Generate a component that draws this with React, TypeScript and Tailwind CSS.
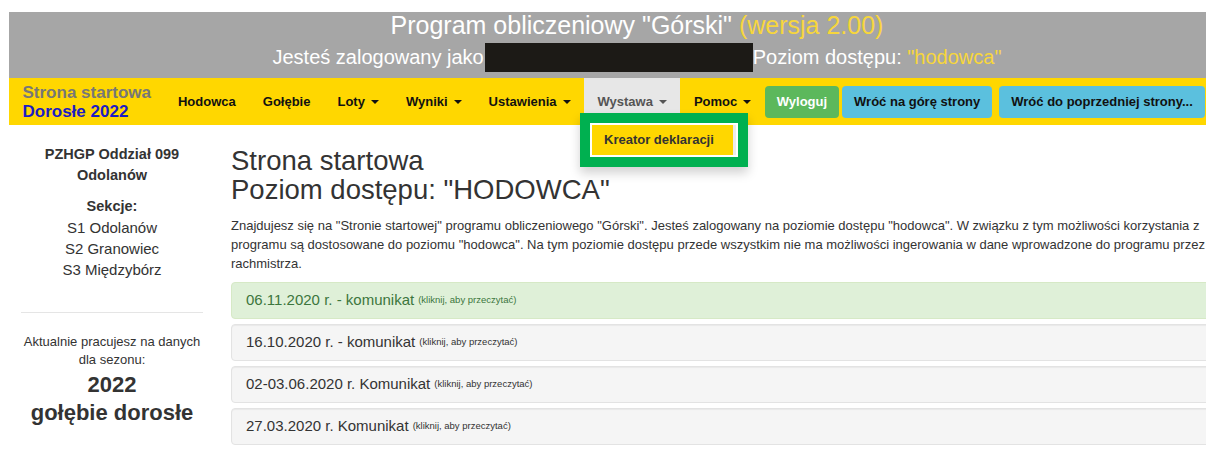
import React from 'react';

const navLinks: { label: string; caret?: boolean; active?: boolean }[] = [
  { label: 'Hodowca' },
  { label: 'Gołębie' },
  { label: 'Loty', caret: true },
  { label: 'Wyniki', caret: true },
  { label: 'Ustawienia', caret: true },
  { label: 'Wystawa', caret: true, active: true },
  { label: 'Pomoc', caret: true },
];

const notices = [
  { date: '06.11.2020 r. - komunikat', fresh: true },
  { date: '16.10.2020 r. - komunikat' },
  { date: '02-03.06.2020 r. Komunikat' },
  { date: '27.03.2020 r. Komunikat' },
];

const Caret = () => (
  <span className="ml-[6px] inline-block h-0 w-0 border-x-[4px] border-t-[4px] border-x-transparent border-t-current align-middle" />
);

export default function App() {
  return (
    <div className="h-[450px] w-full overflow-hidden bg-white font-['Liberation_Sans',Arial,sans-serif] text-[#333]">
      <div className="relative ml-[9px] mt-[12px] w-[1256px]">
        {/* top banner */}
        <div className="h-[66px] bg-[#a6a6a6] text-center text-white">
          <div className="text-[25px] leading-[27px]">
            Program obliczeniowy "Górski" <span className="text-[#f7d63c]">(wersja 2.00)</span>
          </div>
          <div className="mt-[4px] flex items-center justify-center text-[20px] leading-[29px]">
            <span>Jesteś zalogowany jako</span>
            <span className="ml-[1px] inline-block h-[29px] w-[268px] bg-[#1c1a16]" />
            <span>
              Poziom dostępu: <span className="text-[#f7d63c]">"hodowca"</span>
            </span>
          </div>
        </div>

        {/* main navbar */}
        <div className="flex h-[47px] items-stretch bg-[#ffd700] text-[13px] font-bold">
          <div className="flex flex-col justify-center px-[13.5px] text-[17px] leading-[19px]">
            <span className="text-[#777]">Strona startowa</span>
            <span className="text-[#1c1cc4]">Dorosłe 2022</span>
          </div>
          {navLinks.map((l) => (
            <div
              key={l.label}
              className={
                l.active
                  ? 'flex items-center bg-[#e7e7e7] px-[13.5px] text-[#555]'
                  : 'flex items-center px-[13.5px] text-[#111]'
              }
            >
              {l.label}
              {l.caret && <Caret />}
            </div>
          ))}
          <div className="flex items-center">
            <span className="flex h-[32px] items-center rounded-[4px] bg-[#5cb85c] px-[12px] text-white">Wyloguj</span>
            <span className="ml-[3px] flex h-[32px] items-center rounded-[4px] bg-[#5bc0de] px-[12px] text-[#111]">
              Wróć na górę strony
            </span>
            <span className="ml-[7px] flex h-[32px] items-center rounded-[4px] bg-[#5bc0de] px-[12px] text-[#111]">
              Wróć do poprzedniej strony...
            </span>
          </div>
        </div>

        {/* open "Wystawa" menu, outlined */}
        <div className="absolute left-[571px] top-[101px] w-[168px] border-[10px] border-[#00b050] bg-white p-[2px] shadow-[0_6px_10px_rgba(0,0,0,0.18)]">
          <div className="flex h-[30px] items-center">
            <div className="flex h-full w-[141px] items-center bg-[#ffd700] pl-[12px] text-[13px] font-bold text-[#333]">
              Kreator deklaracji
            </div>
            <div className="h-full flex-1 bg-[#ececec]" />
          </div>
        </div>

        {/* content */}
        <div className="flex">
          <aside className="w-[206px] pt-[19px] text-center">
            <div className="text-[14.5px] font-bold leading-[21px]">PZHGP Oddział 099</div>
            <div className="text-[14.5px] font-bold leading-[21px]">Odolanów</div>
            <div className="mt-[10px] text-[14.5px] font-bold leading-[21px]">Sekcje:</div>
            <div className="text-[15px] leading-[21px]">S1 Odolanów</div>
            <div className="text-[15px] leading-[21px]">S2 Granowiec</div>
            <div className="text-[15px] leading-[21px]">S3 Międzybórz</div>
            <hr className="mx-[12px] mt-[32px] border-t border-[#e5e5e5]" />
            <div className="mt-[20px] text-[13px] leading-[18px]">
              Aktualnie pracujesz na danych
              <br />
              dla sezonu:
            </div>
            <div className="mt-[2px] text-[22px] font-bold leading-[27px]">2022</div>
            <div className="text-[22px] font-bold leading-[30px]">gołębie dorosłe</div>
          </aside>

          <main className="w-[1050px] pl-[16px] pr-[13px] pt-[21px]">
            <h2 className="text-[27.5px] leading-[29px]">
              Strona startowa
              <br />
              Poziom dostępu: "HODOWCA"
            </h2>
            <p className="mt-[12px] text-[13px] leading-[19px]">
              Znajdujesz się na "Stronie startowej" programu obliczeniowego "Górski". Jesteś zalogowany na poziomie
              dostępu "hodowca". W związku z tym możliwości korzystania z programu są dostosowane do poziomu "hodowca".
              Na tym poziomie dostępu przede wszystkim nie ma możliwości ingerowania w dane wprowadzone do programu przez
              rachmistrza.
            </p>
            <div className="mt-[9px] flex flex-col gap-[5px]">
              {notices.map((n) => (
                <div
                  key={n.date}
                  className={
                    n.fresh
                      ? 'flex h-[37px] items-center rounded-[4px] border border-[#d6e9c6] bg-[#dff0d8] px-[14px] text-[#3c763d]'
                      : 'flex h-[37px] items-center rounded-[4px] border border-[#e3e3e3] bg-[#f5f5f5] px-[14px] text-[#333] shadow-[inset_0_1px_1px_rgba(0,0,0,0.05)]'
                  }
                >
                  <span className="text-[15px]">{n.date}</span>
                  <span className="ml-[4px] text-[9.5px]">(kliknij, aby przeczytać)</span>
                </div>
              ))}
            </div>
          </main>
        </div>
      </div>
    </div>
  );
}
